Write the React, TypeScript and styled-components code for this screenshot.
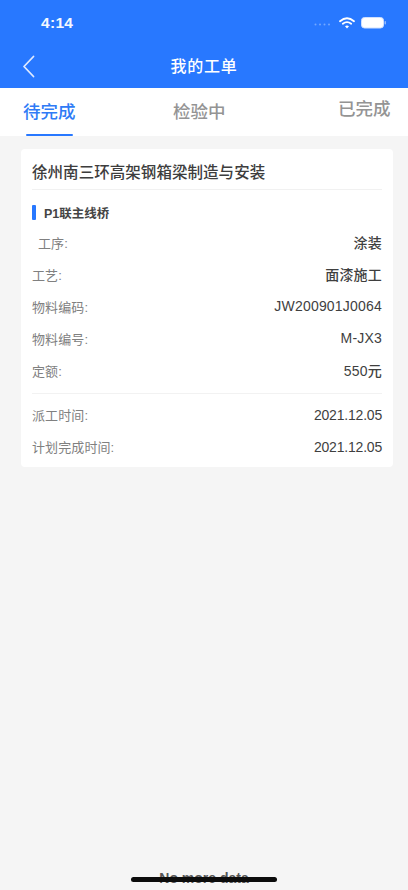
import React from "react";
import styled, { createGlobalStyle } from "styled-components";

const Global = createGlobalStyle`
  html, body { margin: 0; padding: 0; background: #f5f5f5; }
  * { box-sizing: border-box; }
  body { font-family: "Liberation Sans", "Noto Sans CJK SC", sans-serif; }
`;
const Page = styled.div`
  position: relative; width: 408px; height: 890px; overflow: hidden;
  display: flex; flex-direction: column; background: #f5f5f5;
`;
const Header = styled.header`
  height: 88px; background: #2878ff; color: #fff; flex: none;
  display: flex; flex-direction: column;
`;
const StatusBar = styled.div`
  height: 44px; display: flex; align-items: center; justify-content: space-between;
  padding: 1px 22px 0 41px;
`;
const Time = styled.span`
  font-size: 15.5px; font-weight: 700; letter-spacing: 0.3px; color: #f4f8ff;
`;
const StatusIcons = styled.div`display: flex; align-items: center;`;
const NavBar = styled.div`
  flex: 1; display: flex; align-items: center; justify-content: center; position: relative;
  padding-bottom: 2px;
`;
const BackIcon = styled.svg`position: absolute; left: 22px; top: 11px;`;
const NavTitle = styled.div`font-size: 16px; font-weight: 500; color: #fff; letter-spacing: 0.8px;`;
const Tabs = styled.nav`
  height: 48px; flex: none; background: #fff; padding-left: 23px;
  display: grid; grid-template-columns: 150px 165px 1fr;
`;
const Tab = styled.div<{ $active?: boolean; $lift?: number }>`
  position: relative; font-size: 17.5px; line-height: 24px; height: 48px; white-space: nowrap;
  padding-top: ${(p) => 12 - (p.$lift ?? 0)}px;
  color: ${(p) => (p.$active ? "#2f7bf6" : "#949494")};
  font-weight: 500;
`;
const Underline = styled.span`
  position: absolute; left: 3px; top: 46px; width: 47px; height: 2px; background: #2878ff; border-radius: 1px;
`;
const Card = styled.section`
  margin: 13px 15px 0 21px; background: #fff; border-radius: 4px; padding: 0 11px 4px 11px;
  height: 318px; color: #333;
`;
const Title = styled.h2`
  margin: 0; height: 41px; display: flex; align-items: center; font-size: 15.5px; font-weight: 500;
  color: #3d3d3d; border-bottom: 1px solid #f1f1f1; padding-top: 4px; letter-spacing: 0.05px;
`;
const Section = styled.div`
  height: 37px; padding-top: 8px; display: flex; align-items: center; gap: 8px;
  font-size: 12.5px; font-weight: 700; color: #444;
`;
const Bar = styled.span`width: 4px; height: 15px; background: #2878ff; border-radius: 1px;`;
const Row = styled.div`
  height: 32px; padding-bottom: 2px; display: flex; align-items: center; justify-content: space-between;
`;
const Label = styled.span<{ $indent?: boolean }>`
  font-size: 13px; color: #808080; letter-spacing: 0.1px;
  padding-left: ${(p) => (p.$indent ? 6 : 0)}px;
`;
const Value = styled.span<{ $date?: boolean }>`
  font-size: 14px; font-weight: 500; color: #3f3f3f;
  letter-spacing: ${(p) => (p.$date ? "-0.2px" : "0.2px")};
  padding-top: ${(p) => (p.$date ? 2 : 0)}px;
`;
const Rule = styled.div`height: 1px; background: #f2f2f2; margin: 6px 0 5px;`;
const NoMore = styled.div`
  position: absolute; left: 0; right: 0; top: 870px; text-align: center; font-size: 14px; line-height: 16px;
  color: #555; font-weight: 700;
`;
const HomeBar = styled.div`
  position: absolute; left: 131px; top: 877px; width: 146px; height: 5px; border-radius: 3px; background: #0c0c0c;
`;

const rowsA = [
  { label: "工序:", value: "涂装", indent: true },
  { label: "工艺:", value: "面漆施工" },
  { label: "物料编码:", value: "JW200901J0064" },
  { label: "物料编号:", value: "M-JX3" },
  { label: "定额:", value: "550元" },
];
const rowsB = [
  { label: "派工时间:", value: "2021.12.05" },
  { label: "计划完成时间:", value: "2021.12.05" },
];

export default function App() {
  return (
    <Page>
      <Global />
      <Header>
        <StatusBar>
          <Time>4:14</Time>
          <StatusIcons>
            <svg width="72" height="14" viewBox="0 0 72 14">
              <g fill="#fff" fillOpacity="0.35">
                <circle cx="1.5" cy="8.5" r="1" /><circle cx="6" cy="8.5" r="1" />
                <circle cx="10.5" cy="8.5" r="1" /><circle cx="15" cy="8.5" r="1" />
              </g>
              <g fill="none" stroke="#fff" strokeWidth="1.8" strokeLinecap="round">
                <path d="M26 5.2 Q33 -0.6 40 5.2" />
                <path d="M28.8 7.8 Q33 4.4 37.2 7.8" />
              </g>
              <path d="M31 10.2 Q33 8.6 35 10.2 L33 12.4 Z" fill="#fff" />
              <rect x="47.5" y="1.5" width="22" height="10.5" rx="3" fill="#fff" stroke="#cfe0ff" strokeWidth="1" />
              <rect x="70.5" y="5" width="1.5" height="3.5" rx="0.7" fill="#fff" fillOpacity="0.5" />
            </svg>
          </StatusIcons>
        </StatusBar>
        <NavBar>
          <BackIcon width="14" height="23" viewBox="0 0 14 23" fill="none">
            <path d="M11.5 1.5 L2 11.5 L11.5 21.5" stroke="#dfeaff" strokeWidth="1.8" strokeLinecap="round" strokeLinejoin="round" />
          </BackIcon>
          <NavTitle>我的工单</NavTitle>
        </NavBar>
      </Header>
      <Tabs>
        <Tab $active>待完成<Underline /></Tab>
        <Tab>检验中</Tab>
        <Tab $lift={3}>已完成</Tab>
      </Tabs>
      <Card>
        <Title>徐州南三环高架钢箱梁制造与安装</Title>
        <Section><Bar />P1联主线桥</Section>
        {rowsA.map((r) => (
          <Row key={r.label}><Label $indent={r.indent}>{r.label}</Label><Value>{r.value}</Value></Row>
        ))}
        <Rule />
        {rowsB.map((r) => (
          <Row key={r.label}><Label>{r.label}</Label><Value $date>{r.value}</Value></Row>
        ))}
      </Card>
      <NoMore>No more data</NoMore>
      <HomeBar />
    </Page>
  );
}
